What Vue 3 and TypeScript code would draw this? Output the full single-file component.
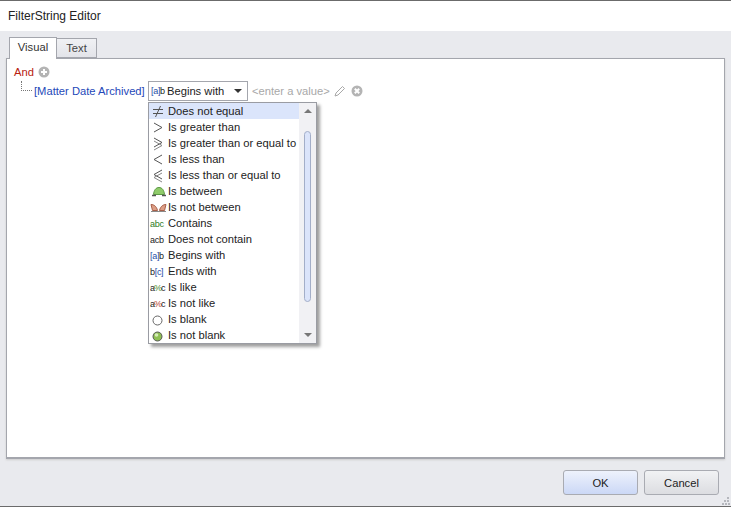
<script setup lang="ts">
const items: { label: string; icon: string; parts?: [string, string][] }[] = [
  { label: 'Does not equal', icon: 'ne' },
  { label: 'Is greater than', icon: 'gt' },
  { label: 'Is greater than or equal to', icon: 'ge' },
  { label: 'Is less than', icon: 'lt' },
  { label: 'Is less than or equal to', icon: 'le' },
  { label: 'Is between', icon: 'between' },
  { label: 'Is not between', icon: 'notbetween' },
  { label: 'Contains', icon: 'text', parts: [['ab', '#2e7d1e'], ['c', '#2e7d1e']] },
  { label: 'Does not contain', icon: 'text', parts: [['acb', '#222']] },
  { label: 'Begins with', icon: 'text', parts: [['[a]', '#1f4fa8'], ['b', '#222']] },
  { label: 'Ends with', icon: 'text', parts: [['b', '#222'], ['[c]', '#1f4fa8']] },
  { label: 'Is like', icon: 'text', parts: [['a', '#222'], ['%', '#4c8c2b'], ['c', '#222']] },
  { label: 'Is not like', icon: 'text', parts: [['a', '#222'], ['%', '#b8432f'], ['c', '#222']] },
  { label: 'Is blank', icon: 'blank' },
  { label: 'Is not blank', icon: 'notblank' },
]
</script>

<template>
  <div class="window">
    <header class="title">FilterString Editor</header>
    <main class="body">
      <div class="tabs">
        <div class="tab active">Visual</div>
        <div class="tab">Text</div>
      </div>
      <section class="panel">
        <div class="group">
          <span class="and">And</span>
          <svg class="round" width="12" height="12" viewBox="0 0 12 12">
            <circle cx="6" cy="6" r="5.5" fill="#b4b4b4" />
            <path d="M6 3v6M3 6h6" stroke="#fff" stroke-width="2" />
          </svg>
        </div>
        <div class="cond">
          <span class="tree"></span>
          <span class="field">[Matter Date Archived]</span>
          <div class="combo">
            <span class="mini"><i class="blue">[a]</i>b</span>
            <span class="combo-text">Begins with</span>
            <span class="arrow"></span>
          </div>
          <span class="value">&lt;enter a value&gt;</span>
          <svg class="pencil" width="12" height="12" viewBox="0 0 12 12">
            <path d="M8.5 1.500l2 2-6.500 6.500-3 1 1-3z" fill="#fff" stroke="#a8a8a8" />
          </svg>
          <svg class="round" width="12" height="12" viewBox="0 0 12 12">
            <circle cx="6" cy="6" r="5.5" fill="#b4b4b4" />
            <path d="M3.800 3.800l4.400 4.400M8.200 3.800l-4.400 4.400" stroke="#fff" stroke-width="2" />
          </svg>
        </div>

        <div class="menu">
          <ul class="list">
            <li v-for="(it, i) in items" :key="it.label" class="row" :class="{ hot: i === 0 }">
              <span class="ico">
                <span v-if="it.icon === 'text'" class="mini" :class="{ tight: it.parts && it.parts.length === 3 }">
                  <i v-for="p in it.parts" :key="p[0]" :style="{ color: p[1] }">{{ p[0] }}</i>
                </span>
                <svg v-else width="18" height="16" viewBox="0 0 18 16" fill="none" stroke="#555">
                  <template v-if="it.icon === 'ne'">
                    <path d="M3 6.500h10M3 10.500h10M10.500 3L5.500 14" />
                  </template>
                  <path v-else-if="it.icon === 'gt'" d="M4 4l8 4.500-8 4.500" />
                  <template v-else-if="it.icon === 'ge'">
                    <path d="M4 3l8 4.500-8 4.500" />
                    <path d="M4 6l8 4.500-8 4.500" stroke="#888" />
                  </template>
                  <path v-else-if="it.icon === 'lt'" d="M12 4L4 8.500l8 4.500" />
                  <template v-else-if="it.icon === 'le'">
                    <path d="M12 3L4 7.500l8 4.500" />
                    <path d="M12 6l-8 4.500 8 4.500" stroke="#888" />
                  </template>
                  <template v-else-if="it.icon === 'between'">
                    <path d="M3.500 11.500C4 7 6 4.500 9 4.500s5 2.500 5.500 7z" fill="#8fcb6a" stroke="#5c9a44" />
                    <path d="M2 12.500h4M12 12.500h4" stroke="#555" stroke-width="1.500" />
                  </template>
                  <template v-else-if="it.icon === 'notbetween'">
                    <path d="M1 5.500C3.500 5.500 6.500 7 7.500 11.500h-5z" fill="#dd9f86" stroke="#a8604a" />
                    <path d="M16 5.500C13.500 5.500 10.500 7 9.500 11.500h5z" fill="#dd9f86" stroke="#a8604a" />
                    <path d="M1 12.500h15" stroke="#8a8a8a" />
                  </template>
                  <circle v-else-if="it.icon === 'blank'" cx="7.500" cy="9.500" r="4.500" fill="#fff" stroke="#666" />
                  <template v-else-if="it.icon === 'notblank'">
                    <circle cx="7.500" cy="9.500" r="4.500" fill="#8fc054" stroke="#555" />
                    <circle cx="6.500" cy="8" r="1.800" fill="#d6ecb8" stroke="none" />
                  </template>
                </svg>
              </span>
              <span class="label">{{ it.label }}</span>
            </li>
          </ul>
          <div class="scroll">
            <span class="up"></span>
            <div class="track"><div class="thumb"></div></div>
            <span class="down"></span>
          </div>
        </div>
      </section>
    </main>
    <footer class="foot">
      <button class="btn ok">OK</button>
      <button class="btn">Cancel</button>
      <svg class="grip" width="8" height="8" viewBox="0 0 8 8" fill="#b5b7bd">
        <rect x="5" y="0" width="2" height="2" /><rect x="2" y="3" width="2" height="2" /><rect x="5" y="3" width="2" height="2" />
        <rect x="0" y="6" width="2" height="2" /><rect x="3" y="6" width="2" height="2" /><rect x="6" y="6" width="2" height="2" />
      </svg>
    </footer>
  </div>
</template>

<style>
html, body { margin: 0; background: #e9eaee; }
</style>

<style scoped>
.window {
  width: 731px; height: 507px; box-sizing: border-box;
  display: flex; flex-direction: column;
  border-top: 1px solid #6b6b6b; border-bottom: 1px solid #6b6b6b;
  background: #e9eaee; color: #222;
  font: 11.2px/16px "Liberation Sans", sans-serif;
  overflow: hidden; position: relative;
}
.title { height: 30px; flex: none; box-sizing: border-box; padding: 7px 8px 0; background: #fff; font-size: 12px; }
.body { flex: 1; display: flex; flex-direction: column; padding: 6px 6px 0 6px; min-height: 0; }
.tabs { display: flex; padding-left: 3px; height: 21px; flex: none; position: relative; z-index: 1; }
.tab {
  box-sizing: border-box; height: 20px; margin-top: 1px; width: 40px; text-align: center; line-height: 18px;
  border: 1px solid #a4a6ad; border-left: none; background: linear-gradient(#f0f1f4, #e3e4e9); color: #444;
}
.tab.active { width: 48px; height: 22px; margin-top: 0; border-left: 1px solid #a4a6ad; border-bottom: none; background: #fff; color: #333; }
.panel { height: 401px; flex: none; box-sizing: border-box; border: 1px solid #a4a6ad; border-bottom-width: 2px; background: #fff; position: relative; padding: 5px 7px; box-shadow: 0 1px 2px #ccc; }
.group { display: flex; align-items: center; gap: 4px; height: 16px; }
.and { color: #b8210f; }
.cond { display: flex; align-items: center; height: 18px; margin-top: 2px; }
.tree { width: 10px; height: 9px; margin: -10px 2px 0 7px; border-left: 1px dotted #777; border-bottom: 1px dotted #777; flex: none; }
.field { color: #2448b8; width: 114px; flex: none; white-space: nowrap; }
.combo { box-sizing: border-box; width: 100px; height: 20px; border: 1px solid #a4a6ad; display: flex; align-items: center; padding-left: 2px; white-space: nowrap; flex: none; }
.combo .mini { width: 16px; }
.combo-text { flex: 1; }
.arrow { width: 0; height: 0; border: 4px solid transparent; border-top: 4px solid #333; border-bottom: none; margin-right: 5px; }
.value { color: #a8a8a8; margin: 0 4px; white-space: nowrap; }
.pencil { margin-right: 5px; }
.mini { font: 9px/16px "Liberation Sans", sans-serif; letter-spacing: -0.3px; display: inline-block; white-space: nowrap; }
.mini.tight { letter-spacing: -1px; }
.mini i { font-style: normal; }
.blue { color: #1f4fa8; }
.menu {
  position: absolute; left: 141px; top: 43px; width: 169px; height: 242px; box-sizing: border-box;
  border: 1px solid #9a9ca3; background: #fff; display: flex; box-shadow: 3px 3px 3px #a0a0a0;
}
.list { margin: 0; padding: 0; list-style: none; width: 150px; flex: none; }
.row { display: flex; height: 16px; align-items: center; }
.row.hot { background: #dbe5fb; }
.ico { width: 19px; flex: none; height: 16px; padding-left: 1px; box-sizing: border-box; overflow: hidden; }
.ico svg { display: block; }
.label { white-space: nowrap; }
.scroll { flex: 1; background: #f1f1f4; display: flex; flex-direction: column; align-items: center; }
.up, .down { width: 0; height: 0; border: 4px solid transparent; flex: none; }
.up { border-bottom: 4px solid #777; border-top: none; margin-top: 6px; }
.down { border-top: 4px solid #777; border-bottom: none; margin-bottom: 6px; }
.track { flex: 1; width: 100%; display: flex; justify-content: center; padding-top: 18px; box-sizing: border-box; }
.thumb { width: 7px; height: 171px; box-sizing: border-box; border: 1px solid #a3aec8; border-radius: 4px; background: #dbe4fa; }
.foot { height: 46px; flex: none; display: flex; justify-content: flex-end; gap: 6px; padding: 10px 12px 0 0; box-sizing: border-box; position: relative; }
.btn { box-sizing: border-box; width: 75px; height: 25px; border: 1px solid #a9abb2; border-radius: 3px; background: linear-gradient(#f1f2f4, #dcdde1); font: inherit; color: #222; padding: 0; }
.btn.ok { background: linear-gradient(#eef2fc, #cbd8f6); }
.grip { position: absolute; right: 1px; bottom: 1px; }
</style>
